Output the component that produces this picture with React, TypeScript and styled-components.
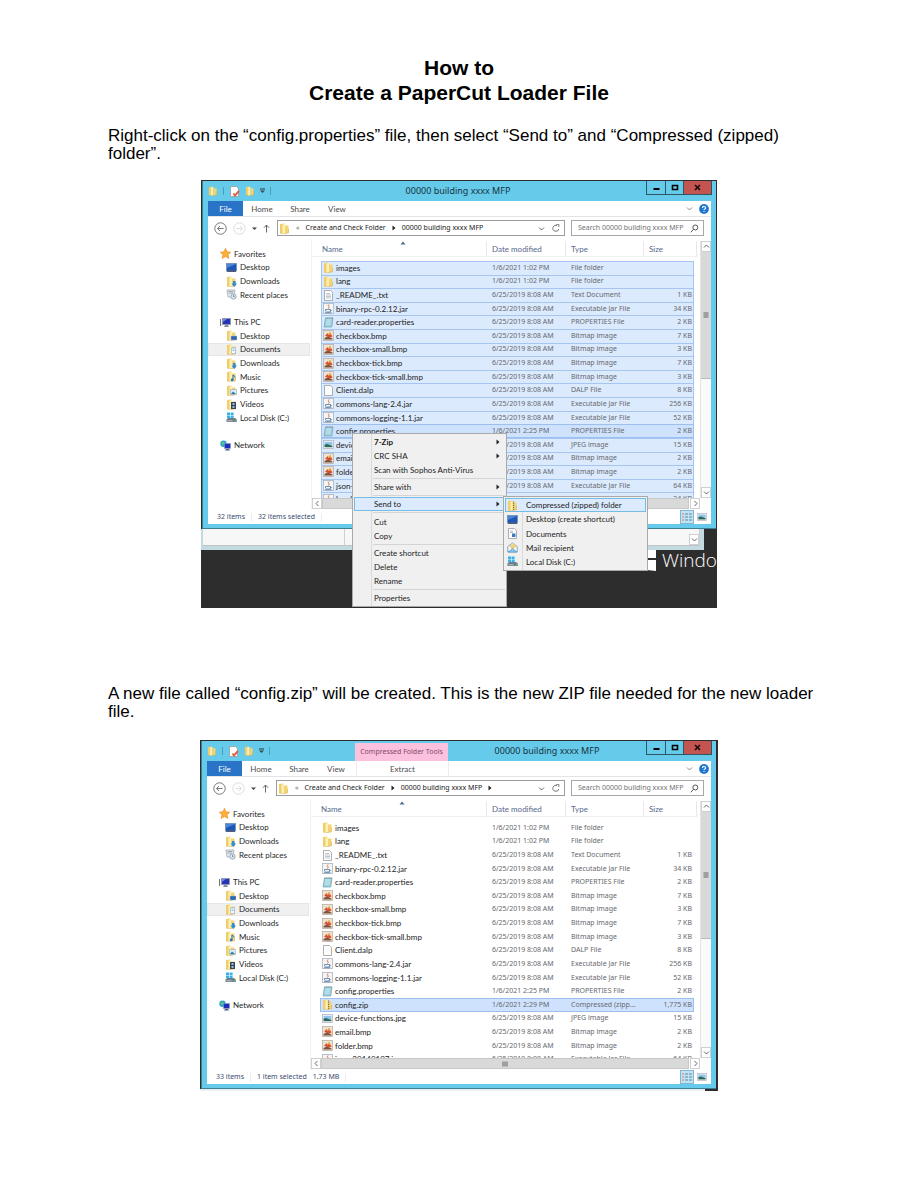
import React from "react";
import styled, { createGlobalStyle, css } from "styled-components";

const ui = 'Lato, "Noto Sans", sans-serif';
const figures = '"Noto Sans", "Open Sans", sans-serif';

const GlobalStyle = createGlobalStyle`
  *, *::before, *::after { box-sizing: border-box; }
  body { margin: 0; background: #fff; color: #000; }
  button, input { font: inherit; color: inherit; margin: 0; padding: 0; border: 0; background: none; border-radius: 0; }
  svg { display: block; flex: none; }
  ul { list-style: none; margin: 0; padding: 0; }
`;

const compact = css`
  font-family: ${figures};
  font-size: 7px;
`;

/* ---------- document ---------- */

const Page = styled.main`
  padding: 55px 108px 96px;
  font-family: "Liberation Sans", Arial, sans-serif;
  font-size: 17px;
  line-height: 18px;
`;
const Title = styled.h1`
  margin: 0 0 22px;
  font-size: 21px;
  line-height: 25px;
  text-align: center;
`;
const Step = styled.p`
  margin: 0 -4px 0 0;
`;
const Figure = styled.figure<{ $max: number; $before: number; $after?: number }>`
  position: relative;
  width: 100%;
  max-width: ${(p) => p.$max}px;
  margin: ${(p) => p.$before}px auto ${(p) => p.$after ?? 0}px;
  background: #2d2d2d;
  overflow: hidden;
  font-family: ${ui};
  font-size: 8px;
  line-height: 10px;
`;

/* ---------- window frame ---------- */

const Frame = styled.section<{ $edge: number }>`
  position: relative;
  margin: 1px ${(p) => p.$edge}px 0 1px;
  padding: 0 5px 4px;
  border-left: 1px solid #3d7f95;
  border-bottom: 1px solid #3f7f96;
  background: #66cbea;
`;
const TitleBar = styled.header`
  display: flex;
  height: 20px;
  margin-right: -1px;
`;
const QuickAccess = styled.div`
  display: flex;
  align-items: center;
  width: 62px;
  gap: 5px;
`;
const QuickDivider = styled.i`
  width: 1px;
  height: 8px;
  background: #4d9cb6;
`;
const ToolsLabel = styled.div`
  ${compact}
  width: 93px;
  margin: 2px 0 0 86px;
  background: #fcc1dd;
  color: #7d4a68;
  text-align: center;
  line-height: 18px;
`;
const WindowTitle = styled.h2`
  flex: 1;
  margin: 0;
  font-family: ${figures};
  font-size: 9px;
  font-weight: 400;
  line-height: 20px;
  text-align: center;
  color: #16323e;
`;
const Controls = styled.div`
  display: flex;
  height: 14px;
  border: 1px solid #2d5663;
  border-top: 0;
`;
const Control = styled.button<{ $close?: boolean }>`
  display: grid;
  place-items: center;
  width: ${(p) => (p.$close ? 28 : 18)}px;
  background: ${(p) => (p.$close ? "#c4544f" : "transparent")};
  & + & { border-left: 1px solid #2d5663; }
`;
const Client = styled.div`
  background: #fff;
`;

/* ---------- ribbon and address bar ---------- */

const Ribbon = styled.nav`
  display: flex;
  height: 16px;
  padding-right: 2px;
  align-items: stretch;
  border-bottom: 1px solid #e3e4e6;
  color: #4c4c4c;
`;
const Tab = styled.button<{ $width: number; $kind?: "file" | "tools" }>`
  width: ${(p) => p.$width}px;
  ${(p) => p.$kind === "file" && css`background: #2a74c8; color: #fff;`}
  ${(p) => p.$kind === "tools" && css`
    margin-left: 2px;
    border-left: 1px solid #f6e6ee;
    border-right: 1px solid #f6e6ee;
  `}
`;
const RibbonEnd = styled.div`
  display: flex;
  align-items: center;
  gap: 6px;
  margin-left: auto;
`;
const AddressRow = styled.div`
  display: flex;
  align-items: center;
  height: 22px;
  padding: 0 7px 0 6px;
`;
const NavButtons = styled.div`
  display: flex;
  align-items: center;
  width: 63px;
  gap: 6px;
`;
const IconButton = styled.button`
  display: grid;
  place-items: center;
`;
const AddressBox = styled.div`
  ${compact}
  display: flex;
  align-items: center;
  flex: 1;
  min-width: 0;
  height: 16px;
  padding: 0 4px 0 1px;
  gap: 6px;
  border: 1px solid #9b9b9b;
  white-space: nowrap;
`;
const Crumb = styled.button`
  color: #222;
`;
const Faint = styled.span`
  color: #777;
`;
const AddressEnd = styled.div`
  display: flex;
  align-items: center;
  gap: 7px;
  margin-left: auto;
`;
const SearchBox = styled.label`
  ${compact}
  display: flex;
  align-items: center;
  width: 133px;
  height: 16px;
  margin-left: 6px;
  padding: 0 4px 0 6px;
  border: 1px solid #a8a8a8;
`;
const SearchInput = styled.input`
  flex: 1;
  min-width: 0;
  outline: 0;
  &::placeholder { color: #737373; opacity: 1; }
`;

/* ---------- body ---------- */

const Body = styled.div`
  display: flex;
  height: 271px;
`;
const Sidebar = styled.ul`
  display: grid;
  grid-auto-rows: 1fr;
  width: 103px;
  height: 205px;
  margin-top: 8px;
`;
const Place = styled.li<{ $root?: boolean; $current?: boolean }>`
  display: flex;
  align-items: center;
  gap: 3px;
  padding-left: ${(p) => (p.$root ? 12 : 18)}px;
  margin-right: 1px;
  color: #1f1f1f;
  white-space: nowrap;
  ${(p) => p.$current && css`background: #f0f0f0; box-shadow: inset 0 0 0 1px #e6e6e6;`}
`;
const FilePane = styled.div`
  display: flex;
  flex-direction: column;
  flex: 1;
  min-width: 0;
  padding-top: 2px;
  border-left: 1px solid #f2f2f2;
`;
const ListArea = styled.div`
  display: flex;
  height: 257px;
`;
const ListClip = styled.div`
  flex: 1;
  min-width: 0;
  overflow: hidden;
`;
const Table = styled.table`
  display: block;
  border-spacing: 0;
`;
const columns = css`
  display: grid;
  grid-template-columns: minmax(0, 1fr) 79px 78px var(--size);
`;
const Head = styled.thead`
  display: block;
  margin: 0 3px 4px 0;
`;
const HeadRow = styled.tr`
  --size: 53px;
  ${columns}
  height: 16px;
  border-bottom: 1px solid #f0f0f0;
`;
const HeadCell = styled.th<{ $first?: boolean }>`
  position: relative;
  padding: 0 0 0 ${(p) => (p.$first ? 10 : 5)}px;
  border-right: 1px solid #e6e9ee;
  font-weight: 400;
  line-height: 16px;
  text-align: left;
  color: #56688c;
`;
const SortMark = styled.span`
  position: absolute;
  top: 0;
  left: 88px;
`;
const Rows = styled.tbody`
  display: grid;
  grid-auto-rows: 1fr;
  height: 245px;
  margin: 0 6px 0 9px;
`;
const Row = styled.tr<{ $state: "plain" | "marked" | "focus" }>`
  --size: 50px;
  ${columns}
  align-items: center;
  ${(p) => p.$state === "marked" && css`
    background: #dceafe;
    box-shadow: inset 0 1px #a6c6f1, inset 1px 0 #a6c6f1, inset -1px 0 #a6c6f1;
  `}
  ${(p) => p.$state === "focus" && css`
    background: #cfe2fd;
    box-shadow: inset 0 0 0 1px #9dbfed;
  `}
`;
const NameCell = styled.td`
  display: flex;
  align-items: center;
  gap: 2px;
  padding: 0 0 0 2px;
  color: #222;
  white-space: nowrap;
`;
const Cell = styled.td<{ $right?: boolean }>`
  ${compact}
  padding: 0 2px 0 5px;
  color: #66696e;
  text-align: ${(p) => (p.$right ? "right" : "left")};
  white-space: nowrap;
`;
const VScroll = styled.div`
  display: flex;
  flex-direction: column;
  width: 11px;
  background: #fafafa;
  border-left: 1px solid #e4e4e4;
`;
const VThumb = styled.div`
  display: grid;
  place-items: center;
  height: 127px;
  margin-bottom: auto;
  background: #d9d9d9;
  border-bottom: 1px solid #bbb;
`;
const HScroll = styled.div`
  display: flex;
  height: 11px;
  margin-right: 11px;
`;
const HThumb = styled.div`
  display: grid;
  place-items: center;
  flex: 1;
  margin-right: 1px;
  background: #d9d9d9;
  border: 1px solid #c8c8c8;
`;
const ScrollButton = styled.button`
  display: grid;
  place-items: center;
  width: 10px;
  height: 11px;
  border: 1px solid #d0d0d0;
  background: #fff;
`;
const StatusBar = styled.footer`
  ${compact}
  display: flex;
  align-items: center;
  height: 14px;
  padding: 0 4px 0 9px;
  gap: 6px;
  color: #3b4a70;
  white-space: nowrap;
`;
const StatusDivider = styled.i`
  width: 1px;
  height: 9px;
  background: #ececec;
`;
const Views = styled.div`
  display: flex;
  align-items: center;
  gap: 3px;
  margin-left: auto;
`;
const ViewButton = styled.button<{ $on?: boolean }>`
  display: grid;
  place-items: center;
  height: 14px;
  width: ${(p) => (p.$on ? 14 : 10)}px;
  ${(p) => p.$on && css`background: #c3e3f2; box-shadow: inset 0 0 0 1px #7fb8d3;`}
`;

/* ---------- desktop behind the window ---------- */

const BackWindow = styled.div`
  display: flex;
  height: 21px;
  margin: 0 13px 0 0;
  padding: 0 4px 4px 2px;
  background: #c3dae1;
`;
const BackPane = styled.div<{ $width?: number }>`
  ${(p) => (p.$width ? css`width: ${p.$width}px;` : css`flex: 1;`)}
  display: flex;
  justify-content: flex-end;
  align-items: flex-end;
  background: #f7f7f7;
  border-right: 1px solid #cfcfcf;
  border-bottom: 1px solid #bfc4c6;
`;
const Desktop = styled.div`
  display: flex;
  justify-content: flex-end;
  height: 58px;
  gap: 6px;
  overflow: hidden;
  color: #fff;
`;
const Brand = styled.span`
  width: 55px;
  font-family: "Open Sans", sans-serif;
  font-size: 19px;
  font-weight: 300;
  line-height: 20px;
  white-space: nowrap;
`;
const Strip = styled.div`
  height: 2px;
  margin-right: 13px;
  background: #e9f0f2;
`;

/* ---------- menus ---------- */

const Menu = styled.ul<{ $sub?: boolean }>`
  position: absolute;
  display: flex;
  flex-direction: column;
  left: ${(p) => (p.$sub ? 302 : 151)}px;
  top: ${(p) => (p.$sub ? 316 : 253)}px;
  width: ${(p) => (p.$sub ? 145 : 155)}px;
  height: ${(p) => (p.$sub ? 75 : 174)}px;
  padding: 1px;
  border: 1px solid #a9a9a9;
  background: linear-gradient(90deg, transparent 18px, #dadada 18px, #dadada 19px, transparent 19px) #f0f0f0;
  color: #1c1c1c;
`;
const MenuItem = styled.li`
  display: flex;
  flex: 1;
`;
const MenuButton = styled.button<{ $on?: boolean; $strong?: boolean }>`
  display: flex;
  align-items: center;
  flex: 1;
  padding-right: 5px;
  text-align: left;
  white-space: nowrap;
  font-weight: ${(p) => (p.$strong ? 700 : 400)};
  ${(p) => p.$on && css`background: #dbebfd; box-shadow: inset 0 0 0 1px #76bde6;`}
`;
const MenuIcon = styled.span<{ $sub?: boolean }>`
  width: ${(p) => (p.$sub ? 21 : 20)}px;
  padding-left: 2px;
`;
const MenuText = styled.span`
  flex: 1;
`;
const MenuLine = styled.li`
  height: 2px;
  margin: 1px 0 0 19px;
  border-top: 1px solid #d4d4d4;
`;

/* ---------- icons ---------- */

type IconName =
  | "folder" | "text" | "jar" | "props" | "bmp" | "page" | "jpg" | "zip" | "star" | "desktop"
  | "downloads" | "recent" | "pc" | "fdesktop" | "documents" | "music" | "pictures" | "videos"
  | "disk" | "network" | "check" | "mail" | "doc";

const folderShape = (
  <>
    <path d="M1 1 5.500 .5v9.700L1 10z" fill="#f0cf6b" />
    <path d="M3.500 1.500 6 1v9.200L3.500 11z" fill="#fdf0b4" />
    <path d="M6 2.500h3.500v7.300L6 10.300z" fill="#f1d474" />
    <path d="M1 10l2.500 1L9.500 9.800V6" stroke="#d6ae4e" strokeWidth=".6" fill="none" />
  </>
);
const sheet = <path d="M1.500 .5h6l2 2v8h-8z" fill="#fdfdfd" stroke="#9b9b9b" strokeWidth=".8" />;

const art: Record<IconName, React.ReactNode> = {
  folder: folderShape,
  text: <>{sheet}<path d="M3 3.500h4M3 5h5M3 6.500h5M3 8h5" stroke="#9fb0bf" strokeWidth=".7" /></>,
  page: sheet,
  doc: <>{sheet}<path d="M3 3h3M3 4.500h3" stroke="#8aa6c4" strokeWidth=".7" /><path d="M5 5.500h3.500v3.500H5z" fill="#3f79bd" /></>,
  jar: (
    <>
      <rect x=".5" y=".5" width="10" height="10" fill="#f4f5f7" stroke="#aab4c0" strokeWidth=".8" />
      <path d="M6 1.500c-2 1.500 1.500 2-.5 4" stroke="#dd6a32" fill="none" />
      <path d="M2.500 6.500h5v1.500c-1 1.500-4 1.500-5 0zM7.500 7c1.500 0 1 1.500-.5 1.500M2 9.700h6.500" stroke="#5179a5" strokeWidth=".8" fill="none" />
    </>
  ),
  props: (
    <>
      <path d="M2.500 1H10L8.800 10H1z" fill="#9fd0dd" stroke="#6fa2b5" strokeWidth=".7" />
      <path d="M3.500 3H8M3.200 5h4.500M3 7h4.500" stroke="#d8f0f5" strokeWidth=".8" />
      <path d="M2.500 1H10" stroke="#888" strokeWidth=".8" strokeDasharray="1 .6" />
    </>
  ),
  bmp: (
    <>
      <rect x=".5" y=".5" width="10" height="10" fill="#ece3d6" stroke="#b3a899" strokeWidth=".7" />
      <path d="M2 6 4.500 3l1 2L7 2l2.500 4.500-2 1z" fill="#d8502f" />
      <path d="M5 3.500 7.500 2 8 5z" fill="#efb33c" />
      <path d="M1.500 8 5 6.500l4.500 2v1h-8z" fill="#7d5340" />
    </>
  ),
  jpg: (
    <>
      <rect x=".4" y="1.500" width="10.200" height="8" fill="#fff" stroke="#aab" strokeWidth=".7" />
      <path d="M1.500 2.700h8v4h-8z" fill="#8fc5e8" />
      <path d="M1.500 5.700 4 5l5.500 2v1.300h-8z" fill="#2b6a58" />
    </>
  ),
  zip: <>{folderShape}<path d="M6.500 1.500v9" stroke="#7d6d3a" strokeWidth="1.300" strokeDasharray="1 .8" /></>,
  star: <path d="m5.500 .3 1.600 3.400 3.600.5-2.600 2.500.7 3.800-3.300-1.900-3.300 1.900.7-3.800L.3 4.200l3.600-.5z" fill="#fbb03c" stroke="#e98a1c" strokeWidth=".6" />,
  desktop: <><rect x=".5" y="1.500" width="10" height="7.500" fill="#1d56b5" stroke="#6f8bb0" strokeWidth=".7" /><path d="M1 2h9L1 6z" fill="#4a86d8" /><path d="M1 9.300h9" stroke="#333f55" /></>,
  downloads: <>{folderShape}<path d="M7 5h2.500v2.500H11L8.250 11 5.500 7.500H7z" fill="#2c8fd8" /></>,
  recent: <><path d="M1 1h8l-1 7H2z" fill="#e6ebef" stroke="#96a0aa" strokeWidth=".7" /><path d="M2.500 2.500h5M2.500 4h4.500" stroke="#7e93a8" strokeWidth=".7" /><circle cx="7.500" cy="7.500" r="2.700" fill="#dbe9f2" stroke="#7f95a7" strokeWidth=".7" /><path d="M7.500 6v1.700h1.200" stroke="#456" strokeWidth=".6" fill="none" /></>,
  pc: <><path d="M.5 2v7" stroke="#777" strokeWidth="1.200" /><rect x="2.500" y="1.500" width="8" height="6" fill="#2434b5" stroke="#9096ad" strokeWidth=".8" /><path d="M3 2h4L3 5z" fill="#6b86e8" /><path d="M5 8h3l1 2H4z" fill="#8a8fa0" /></>,
  fdesktop: <>{folderShape}<path d="M5 6h6v4H5z" fill="#2d66b2" stroke="#a5bddb" strokeWidth=".5" /></>,
  documents: <>{folderShape}<path d="M5.500 3.500h4v6h-4z" fill="#f7fbff" stroke="#8eaccb" strokeWidth=".6" /><path d="M6.500 5h2M6.500 6.500h2" stroke="#5a8dc4" strokeWidth=".6" /></>,
  music: <>{folderShape}<path d="M7 4v4.500M7 4l2.500 2" stroke="#1d74d0" fill="none" /><circle cx="6.200" cy="8.800" r="1.400" fill="#1d74d0" /></>,
  pictures: <>{folderShape}<path d="M4.500 4.500h6v5h-6z" fill="#d8effa" stroke="#7b9cb5" strokeWidth=".5" /><path d="m5 9 2-2.500L10 9z" fill="#2c7aa5" /></>,
  videos: <>{folderShape}<path d="M5 3h5v7H5z" fill="#3c4653" /><path d="M6.500 4h2v2h-2zM6.500 7h2v2h-2z" fill="#8dc1e6" /></>,
  disk: <><path d="M1 .5h3v2.500H1zM4.600 .5h3v2.500h-3zM1 3.500h3V6H1zM4.600 3.500h3V6h-3z" fill="#37b3ea" /><path d="M.5 7.500 2 6h7l1.800 1.500V10H.5z" fill="#6d7f8b" /><path d="M1.500 8.800h5" stroke="#cfd8dd" strokeWidth=".8" /><path d="M8.500 8.800h1.500" stroke="#5fd36b" /></>,
  network: <><circle cx="3.500" cy="3.800" r="3.200" fill="#2aa2d8" /><path d="M1.500 2.500 4 1.500l.5 2-2 2z" fill="#63c66d" /><rect x="4.500" y="3.500" width="6" height="5" fill="#1d2fb8" stroke="#8e98c7" strokeWidth=".6" /><path d="M6 9h3l1 1.500H5z" fill="#555f80" /></>,
  check: <>{sheet}<path d="m4.500 7.500 1.500 2 4-4.500" stroke="#e0603c" strokeWidth="1.900" fill="none" /></>,
  mail: <><path d="M.8 4.500 5.500 1l4.700 3.500v5.500H.8z" fill="#f6fafc" stroke="#6d93ae" strokeWidth=".8" /><path d="M2.200 4 7 1.500l2.500 3-4 3z" fill="#f0cf7a" /><path d="m1 10 4.500-3.500L10 10z" fill="#8ec6ea" stroke="#4b8fbf" strokeWidth=".6" /></>,
};

const Icon = ({ name, size = 11 }: { name: IconName; size?: number }) => (
  <svg width={size} height={size} viewBox="0 0 11 11" aria-hidden="true">{art[name]}</svg>
);

type Direction = "up" | "down" | "left" | "right";
const chevrons: Record<Direction, string> = {
  up: "M1 4.500 3.500 2 6 4.500",
  down: "M1 2.500 3.500 5 6 2.500",
  left: "M4.500 1 2 3.500 4.500 6",
  right: "M2.500 1 5 3.500 2.500 6",
};
const Chevron = ({ to, color = "#666" }: { to: Direction; color?: string }) => (
  <svg width="7" height="7" viewBox="0 0 7 7" fill="none" stroke={color} aria-hidden="true"><path d={chevrons[to]} /></svg>
);
const Wedge = () => (
  <svg width="4" height="6" viewBox="0 0 4 6" aria-hidden="true"><path d="M.5 .5 3.500 3 .5 5.500z" fill="#222" /></svg>
);
const Caret = ({ bar }: { bar?: boolean }) => (
  <svg width="5" height="6" viewBox="0 0 5 6" aria-hidden="true">
    {bar && <path d="M0 1h5" stroke="#1f3d48" />}
    <path d="M0 2.500h5L2.500 5z" fill="#444" />
  </svg>
);
const RoundArrow = ({ back }: { back?: boolean }) => (
  <svg width="13" height="13" viewBox="0 0 13 13" fill="none" stroke={back ? "#777" : "#dcdcdc"} aria-hidden="true">
    <circle cx="6.500" cy="6.500" r="5.700" />
    <path d={back ? "M9.500 6.500h-6M6 4 3.500 6.500 6 9" : "M3.500 6.500h6M7 4l2.500 2.500L7 9"} />
  </svg>
);
const UpArrow = () => (
  <svg width="7" height="9" viewBox="0 0 7 9" fill="none" stroke="#666" aria-hidden="true"><path d="M3.500 8.500V1M1 3.700 3.500 1 6 3.700" /></svg>
);
const Refresh = () => (
  <svg width="8" height="8" viewBox="0 0 8 8" fill="none" stroke="#777" aria-hidden="true"><path d="M6.800 5A3 3 0 1 1 5 1.500M4.200 .3h2.600V3" /></svg>
);
const Magnifier = () => (
  <svg width="9" height="9" viewBox="0 0 9 9" fill="none" stroke="#555" aria-hidden="true"><circle cx="5.300" cy="3.500" r="2.500" /><path d="M3.500 5.300 .8 8.300" /></svg>
);
const Help = () => (
  <svg width="10" height="10" viewBox="0 0 9 9" aria-hidden="true">
    <circle cx="4.500" cy="4.500" r="4.400" fill="#1f78d0" />
    <path d="M3.100 3.500c0-1.800 2.900-1.700 2.900 0 0 1-1.500 1-1.500 2M4.500 6.300v1" stroke="#fff" fill="none" />
  </svg>
);
const Grip = ({ across }: { across?: boolean }) => (
  <svg width="6" height="6" viewBox="0 0 6 6" stroke="#666" aria-hidden="true">
    <path d={across ? "M1 .5v5M3 .5v5M5 .5v5" : "M.5 1h5M.5 3h5M.5 5h5"} />
  </svg>
);
const DetailsGlyph = () => (
  <svg width="10" height="9" viewBox="0 0 10 9" fill="none" aria-hidden="true">
    <path d="M0 1h2M0 4h2M0 7h2" stroke="#d07a6a" /><path d="M3 1h3M7 1h3M3 4h3M7 4h3M3 7h3M7 7h3" stroke="#5d87a8" />
  </svg>
);

/* ---------- data ---------- */

type FileEntry = [IconName, string, string, string, string];
const OLD = "6/25/2019 8:08 AM";
const JAR = "Executable Jar File";
const BMP = "Bitmap image";

const leading: FileEntry[] = [
  ["folder", "images", "1/6/2021 1:02 PM", "File folder", ""],
  ["folder", "lang", "1/6/2021 1:02 PM", "File folder", ""],
  ["text", "_README_.txt", OLD, "Text Document", "1 KB"],
  ["jar", "binary-rpc-0.2.12.jar", OLD, JAR, "34 KB"],
  ["props", "card-reader.properties", OLD, "PROPERTIES File", "2 KB"],
  ["bmp", "checkbox.bmp", OLD, BMP, "7 KB"],
  ["bmp", "checkbox-small.bmp", OLD, BMP, "3 KB"],
  ["bmp", "checkbox-tick.bmp", OLD, BMP, "7 KB"],
  ["bmp", "checkbox-tick-small.bmp", OLD, BMP, "3 KB"],
  ["page", "Client.dalp", OLD, "DALP File", "8 KB"],
  ["jar", "commons-lang-2.4.jar", OLD, JAR, "256 KB"],
  ["jar", "commons-logging-1.1.jar", OLD, JAR, "52 KB"],
  ["props", "config.properties", "1/6/2021 2:25 PM", "PROPERTIES File", "2 KB"],
];
const zipFile: FileEntry = ["zip", "config.zip", "1/6/2021 2:29 PM", "Compressed (zipp...", "1,775 KB"];
const trailing: FileEntry[] = [
  ["jpg", "device-functions.jpg", OLD, "JPEG image", "15 KB"],
  ["bmp", "email.bmp", OLD, BMP, "2 KB"],
  ["bmp", "folder.bmp", OLD, BMP, "2 KB"],
  ["jar", "json-20140107.jar", OLD, JAR, "64 KB"],
];
const lastJar: FileEntry = ["jar", "level-loader.jar", OLD, JAR, "24 KB"];

const places: ([IconName, string, boolean?] | null)[] = [
  ["star", "Favorites", true],
  ["desktop", "Desktop"],
  ["downloads", "Downloads"],
  ["recent", "Recent places"],
  null,
  ["pc", "This PC", true],
  ["fdesktop", "Desktop"],
  ["documents", "Documents"],
  ["downloads", "Downloads"],
  ["music", "Music"],
  ["pictures", "Pictures"],
  ["videos", "Videos"],
  ["disk", "Local Disk (C:)"],
  null,
  ["network", "Network", true],
];

/* ---------- explorer ---------- */

interface ExplorerProps {
  files: FileEntry[];
  focus: string;
  edge: number;
  allSelected?: boolean;
  zipTools?: boolean;
  status: string[];
}

const Explorer = ({ files, focus, edge, allSelected, zipTools, status }: ExplorerProps) => (
  <Frame $edge={edge}>
    <TitleBar>
      <QuickAccess>
        <Icon name="folder" size={10} />
        <QuickDivider />
        <Icon name="check" size={11} />
        <Icon name="folder" size={10} />
        <Caret bar />
        <QuickDivider />
      </QuickAccess>
      {zipTools && <ToolsLabel>Compressed Folder Tools</ToolsLabel>}
      <WindowTitle>00000 building xxxx MFP</WindowTitle>
      <Controls>
        <Control aria-label="Minimize">
          <svg width="7" height="7" viewBox="0 0 7 7"><path d="M.5 5h6" stroke="#000" strokeWidth="2" /></svg>
        </Control>
        <Control aria-label="Maximize">
          <svg width="8" height="7" viewBox="0 0 8 7"><path d="M1.500 1.500h5v4h-5z" fill="none" stroke="#000" strokeWidth="1.600" /></svg>
        </Control>
        <Control $close aria-label="Close">
          <svg width="7" height="7" viewBox="0 0 7 7"><path d="m1 1 5 5M6 1 1 6" stroke="#1a0a0a" strokeWidth="1.700" /></svg>
        </Control>
      </Controls>
    </TitleBar>
    <Client>
      <Ribbon>
        <Tab $width={35} $kind="file">File</Tab>
        <Tab $width={38}>Home</Tab>
        <Tab $width={38}>Share</Tab>
        <Tab $width={36}>View</Tab>
        {zipTools && <Tab $width={93} $kind="tools">Extract</Tab>}
        <RibbonEnd>
          <Chevron to="down" color="#888" />
          <Help />
        </RibbonEnd>
      </Ribbon>
      <AddressRow>
        <NavButtons>
          <IconButton aria-label="Back"><RoundArrow back /></IconButton>
          <IconButton aria-label="Forward"><RoundArrow /></IconButton>
          <IconButton aria-label="Recent locations"><Caret /></IconButton>
          <IconButton aria-label="Up"><UpArrow /></IconButton>
        </NavButtons>
        <AddressBox>
          <Icon name="folder" />
          <Faint>«</Faint>
          <Crumb>Create and Check Folder</Crumb>
          <Wedge />
          <Crumb>00000 building xxxx MFP</Crumb>
          {zipTools && <Wedge />}
          <AddressEnd>
            <Chevron to="down" />
            <Refresh />
          </AddressEnd>
        </AddressBox>
        <SearchBox>
          <SearchInput aria-label="Search" placeholder="Search 00000 building xxxx MFP" />
          <Magnifier />
        </SearchBox>
      </AddressRow>
      <Body>
        <Sidebar>
          {places.map((p, i) =>
            p ? (
              <Place key={i} $root={p[2]} $current={p[1] === "Documents"}>
                <Icon name={p[0]} />
                {p[1]}
              </Place>
            ) : (
              <li key={i} />
            )
          )}
        </Sidebar>
        <FilePane>
          <ListArea>
            <ListClip>
              <Table>
                <Head>
                  <HeadRow>
                    <HeadCell $first>
                      Name
                      <SortMark>
                        <svg width="6" height="4" viewBox="0 0 6 4"><path d="M.5 3.500 3 .5l2.500 3z" fill="#4f6a92" /></svg>
                      </SortMark>
                    </HeadCell>
                    <HeadCell>Date modified</HeadCell>
                    <HeadCell>Type</HeadCell>
                    <HeadCell>Size</HeadCell>
                  </HeadRow>
                </Head>
                <Rows>
                  {files.map(([icon, name, date, type, size]) => (
                    <Row key={name} $state={name === focus ? "focus" : allSelected ? "marked" : "plain"}>
                      <NameCell><Icon name={icon} />{name}</NameCell>
                      <Cell>{date}</Cell>
                      <Cell>{type}</Cell>
                      <Cell $right>{size}</Cell>
                    </Row>
                  ))}
                </Rows>
              </Table>
            </ListClip>
            <VScroll>
              <ScrollButton aria-label="Scroll up"><Chevron to="up" /></ScrollButton>
              <VThumb><Grip /></VThumb>
              <ScrollButton aria-label="Scroll down"><Chevron to="down" /></ScrollButton>
            </VScroll>
          </ListArea>
          <HScroll>
            <ScrollButton aria-label="Scroll left"><Chevron to="left" /></ScrollButton>
            <HThumb><Grip across /></HThumb>
            <ScrollButton aria-label="Scroll right"><Chevron to="right" /></ScrollButton>
          </HScroll>
        </FilePane>
      </Body>
      <StatusBar>
        <span>{status[0]}</span>
        <StatusDivider />
        {status.slice(1).map((s) => <span key={s}>{s}</span>)}
        <StatusDivider />
        <Views>
          <ViewButton $on aria-label="Details"><DetailsGlyph /></ViewButton>
          <ViewButton aria-label="Thumbnails"><Icon name="jpg" size={10} /></ViewButton>
        </Views>
      </StatusBar>
    </Client>
  </Frame>
);

/* ---------- context menu ---------- */

type Entry = { text: string; more?: boolean; strong?: boolean; on?: boolean } | null;
const actions: Entry[] = [
  { text: "7-Zip", more: true, strong: true },
  { text: "CRC SHA", more: true },
  { text: "Scan with Sophos Anti-Virus" },
  null,
  { text: "Share with", more: true },
  null,
  { text: "Send to", more: true, on: true },
  null,
  { text: "Cut" },
  { text: "Copy" },
  null,
  { text: "Create shortcut" },
  { text: "Delete" },
  { text: "Rename" },
  null,
  { text: "Properties" },
];
const targets: [IconName, string][] = [
  ["zip", "Compressed (zipped) folder"],
  ["desktop", "Desktop (create shortcut)"],
  ["doc", "Documents"],
  ["mail", "Mail recipient"],
  ["disk", "Local Disk (C:)"],
];

const ContextMenus = () => (
  <>
    <Menu>
      {actions.map((a, i) =>
        a ? (
          <MenuItem key={i}>
            <MenuButton $on={a.on} $strong={a.strong}>
              <MenuIcon />
              <MenuText>{a.text}</MenuText>
              {a.more && <Wedge />}
            </MenuButton>
          </MenuItem>
        ) : (
          <MenuLine key={i} />
        )
      )}
    </Menu>
    <Menu $sub>
      {targets.map(([icon, text], i) => (
        <MenuItem key={text}>
          <MenuButton $on={i === 0}>
            <MenuIcon $sub><Icon name={icon} /></MenuIcon>
            <MenuText>{text}</MenuText>
          </MenuButton>
        </MenuItem>
      ))}
    </Menu>
  </>
);

export default function App() {
  return (
    <>
      <GlobalStyle />
      <Page>
        <Title>How to<br />Create a PaperCut Loader File</Title>
        <Step>
          Right-click on the “config.properties” file, then select “Send to” and “Compressed (zipped) folder”.
        </Step>
        <Figure $max={516} $before={17} $after={77}>
          <Explorer
            files={[...leading, ...trailing, lastJar]}
            focus="config.properties"
            edge={1}
            allSelected
            status={["32 items", "32 items selected"]}
          />
          <BackWindow>
            <BackPane $width={142} />
            <BackPane><ScrollButton aria-label="Scroll down"><Chevron to="down" /></ScrollButton></BackPane>
          </BackWindow>
          <Desktop>
            <svg width="18" height="21" viewBox="0 0 18 21" aria-hidden="true">
              <path d="M0 1h8v7H0zM9 0h9v8H9zM0 10h8v10l-8-1zM9 10h9v11l-9-1z" fill="#fff" />
            </svg>
            <Brand>Windo</Brand>
          </Desktop>
          <ContextMenus />
        </Figure>
        <Step>
          A new file called “config.zip” will be created. This is the new ZIP file needed for the new loader file.
        </Step>
        <Figure $max={518} $before={19}>
          <Explorer
            files={[...leading, zipFile, ...trailing]}
            focus="config.zip"
            edge={2}
            zipTools
            status={["33 items", "1 item selected", "1.73 MB"]}
          />
          <Strip />
        </Figure>
      </Page>
    </>
  );
}
